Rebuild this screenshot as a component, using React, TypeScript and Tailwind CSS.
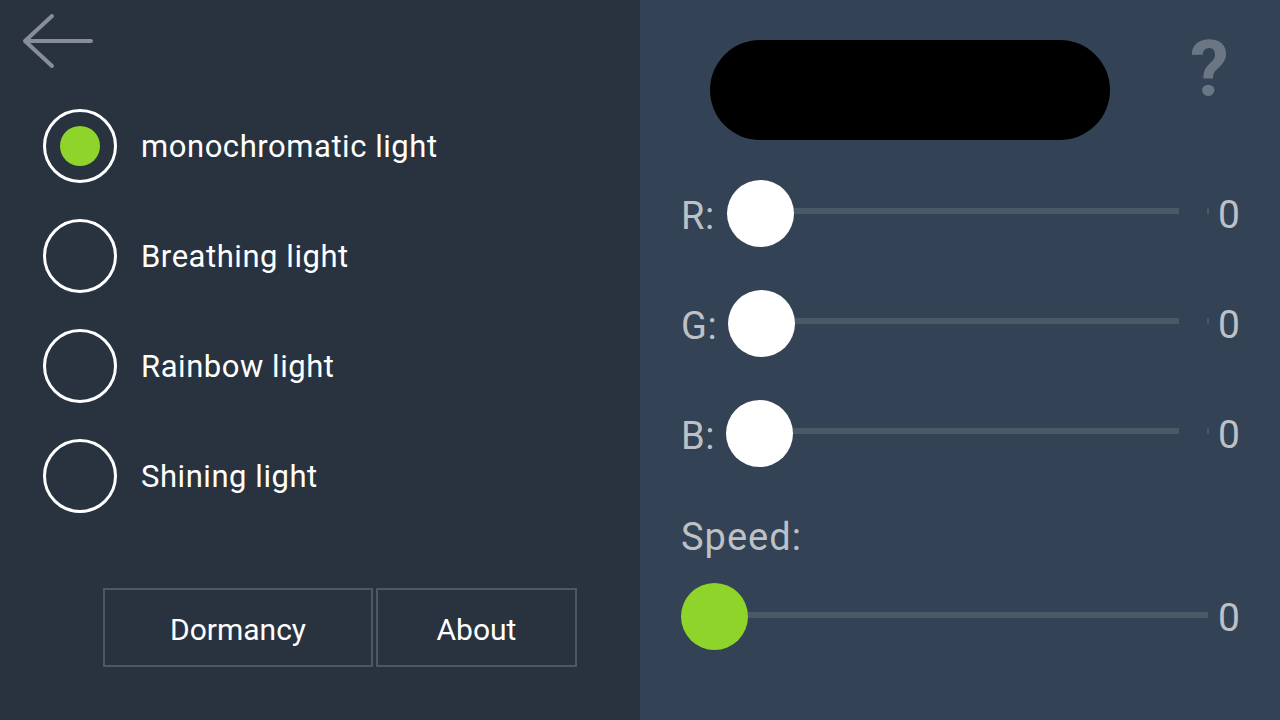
import { useState } from "react";

const modes = ["monochromatic light", "Breathing light", "Rainbow light", "Shining light"];

function Radio({ checked }: { checked: boolean }) {
  return (
    <div className="flex h-[74px] w-[74px] shrink-0 items-center justify-center rounded-full border-[3px] border-white">
      {checked && <div className="h-[40px] w-[40px] rounded-full bg-[#8fd42b]" />}
    </div>
  );
}

function ColorSlider({ label, thumbLeft }: { label: string; thumbLeft: number }) {
  return (
    <div className="flex h-[110px] items-center pl-[41px]">
      <span className="mt-[5px] w-[46px] text-[38px] leading-none tracking-[0.5px] text-[#bdc1c6]">
        {label}
      </span>
      <div className="relative flex h-[67px] w-[483px] items-center">
        {/* track */}
        <div className="mt-[-4px] ml-[30px] h-[6px] w-[422px] bg-[#4b5866]" />
        <div className="mt-[-4px] ml-[28px] h-[6px] w-[2px] bg-[#4b5866]" />
        {/* thumb */}
        <div
          className="absolute top-0 h-[67px] w-[67px] rounded-full bg-white"
          style={{ left: thumbLeft }}
        />
      </div>
      <span className="mt-[5px] ml-[8px] text-[39px] leading-none text-[#bdc1c6]">0</span>
    </div>
  );
}

export default function App() {
  const [mode, setMode] = useState(0);

  return (
    <div
      className="flex h-[720px] w-[1280px] overflow-hidden"
      style={{ fontFamily: "Roboto, 'Noto Sans', sans-serif" }}
    >
      {/* Left: mode list */}
      <div className="flex w-[640px] shrink-0 flex-col bg-[#29333f]">
        <div className="pt-[12px] pl-[21px]">
          <svg width="76" height="58" viewBox="0 0 76 58" fill="none">
            <path
              d="M70 29H4M31 4L4 29L31 54"
              stroke="#878e97"
              strokeWidth="4"
              strokeLinecap="round"
              strokeLinejoin="round"
            />
          </svg>
        </div>

        <div className="mt-[39px] flex flex-col gap-[36px] pl-[43px]">
          {modes.map((m, i) => (
            <button
              key={m}
              onClick={() => setMode(i)}
              className="flex h-[74px] items-center gap-[24px] text-left"
            >
              <Radio checked={mode === i} />
              <span className="mt-[1px] text-[31px] leading-none tracking-[0.55px] text-white">{m}</span>
            </button>
          ))}
        </div>

        <div className="mt-[75px] ml-[103px] flex gap-[3px]">
          <button className="flex h-[79px] w-[270px] items-center justify-center border-2 border-[#4e5864] pt-[4px] text-[30px] leading-none text-white">
            Dormancy
          </button>
          <button className="flex h-[79px] w-[201px] items-center justify-center border-2 border-[#4e5864] pt-[4px] text-[30px] leading-none text-white">
            About
          </button>
        </div>
      </div>

      {/* Right: colour controls */}
      <div className="flex flex-1 flex-col bg-[#334254]">
        <div className="flex items-start pt-[40px]">
          <div className="ml-[70px] h-[100px] w-[400px] rounded-full bg-black" />
          <span className="mt-[-9px] ml-[80px] text-[78px] font-bold leading-none text-[#6b7684]">
            ?
          </span>
        </div>

        <div className="mt-[18px] flex flex-col">
          <ColorSlider label="R:" thumbLeft={0} />
          <ColorSlider label="G:" thumbLeft={1} />
          <ColorSlider label="B:" thumbLeft={-1} />
        </div>

        <div className="mt-[30px] pl-[41px] text-[38px] leading-none tracking-[1px] text-[#bdc1c6]">
          Speed:
        </div>

        <div className="mt-[27px] flex h-[67px] items-center pl-[41px]">
          <div className="relative flex h-[67px] w-[529px] items-center">
            <div className="mt-[-3px] ml-[40px] h-[6px] w-[487px] bg-[#4b5866]" />
            <div className="absolute top-0 left-0 h-[67px] w-[67px] rounded-full bg-[#8fd42b]" />
          </div>
          <span className="mt-[3px] ml-[8px] text-[39px] leading-none text-[#bdc1c6]">0</span>
        </div>
      </div>
    </div>
  );
}
